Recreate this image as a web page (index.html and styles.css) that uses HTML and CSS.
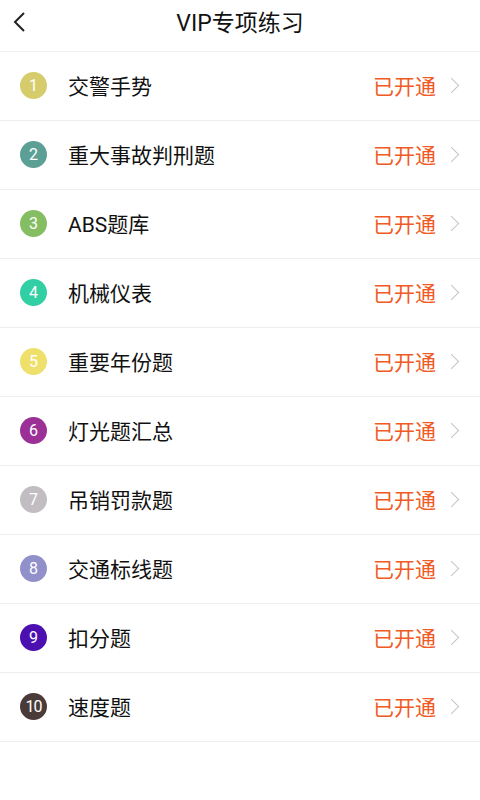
FILE: index.html
```html
<!DOCTYPE html>
<html lang="zh">
<head>
    <meta charset="UTF-8">
    <meta name="viewport" content="width=device-width, initial-scale=1.0">
    <title>VIP专项练习</title>
    <link rel="stylesheet" href="styles.css">
</head>
<body>

<div class="top-bar">
    <a class="back" href="#">
        <svg width="14" height="20" viewBox="0 0 14 20"><path d="M12 1 L3 10 L12 19" fill="none" stroke="#222" stroke-width="2"/></svg>
    </a>
    <div class="title">VIP专项练习</div>
</div>

<div class="list">
    <div class="item"><span class="num c1">1</span><span class="name">交警手势</span><span class="status">已开通</span><span class="arrow"></span></div>
    <div class="item"><span class="num c2">2</span><span class="name">重大事故判刑题</span><span class="status">已开通</span><span class="arrow"></span></div>
    <div class="item"><span class="num c3">3</span><span class="name">ABS题库</span><span class="status">已开通</span><span class="arrow"></span></div>
    <div class="item"><span class="num c4">4</span><span class="name">机械仪表</span><span class="status">已开通</span><span class="arrow"></span></div>
    <div class="item"><span class="num c5">5</span><span class="name">重要年份题</span><span class="status">已开通</span><span class="arrow"></span></div>
    <div class="item"><span class="num c6">6</span><span class="name">灯光题汇总</span><span class="status">已开通</span><span class="arrow"></span></div>
    <div class="item"><span class="num c7">7</span><span class="name">吊销罚款题</span><span class="status">已开通</span><span class="arrow"></span></div>
    <div class="item"><span class="num c8">8</span><span class="name">交通标线题</span><span class="status">已开通</span><span class="arrow"></span></div>
    <div class="item"><span class="num c9">9</span><span class="name">扣分题</span><span class="status">已开通</span><span class="arrow"></span></div>
    <div class="item"><span class="num c10">10</span><span class="name">速度题</span><span class="status">已开通</span><span class="arrow"></span></div>
</div>

</body>
</html>
```
FILE: styles.css
```css
body {
    margin: 0;
    background: #fff;
    font-family: Roboto, "Noto Sans CJK SC", sans-serif;
    color: #111;
}
.top-bar {
    height: 51px;
    border-bottom: 1px solid #f0f0f0;
    display: flex;
    align-items: center;
    justify-content: center;
    position: relative;
}
.back {
    position: absolute;
    left: 12px;
    top: 12px;
}
.title {
    font-size: 23px;
    margin-top: -9px;
}
.item {
    height: 66px;
    padding: 0 19px 2px 20px;
    border-bottom: 1px solid #eee;
    display: flex;
    align-items: center;
}
.num {
    width: 27px;
    height: 27px;
    border-radius: 50%;
    color: #fff;
    font-size: 16px;
    display: flex;
    align-items: center;
    justify-content: center;
    flex-shrink: 0;
}
.name {
    margin-left: 21px;
    font-size: 21px;
    flex: 1;
}
.status {
    color: #f05a24;
    font-size: 21px;
}
.arrow {
    width: 10px;
    height: 10px;
    border-top: 1.5px solid #c4c4c4;
    border-right: 1.5px solid #c4c4c4;
    transform: rotate(45deg);
    margin-left: 10px;
    margin-right: 4px;
}
.c1 { background: #d6cc6c; }
.c2 { background: #5c9f95; }
.c3 { background: #85bd62; }
.c4 { background: #32cfa4; }
.c5 { background: #efe06c; }
.c6 { background: #9b3197; }
.c7 { background: #c1bdc1; }
.c8 { background: #9290cb; }
.c9 { background: #4c10b0; }
.c10 { background: #4a3b39; letter-spacing: -1px; }
```
